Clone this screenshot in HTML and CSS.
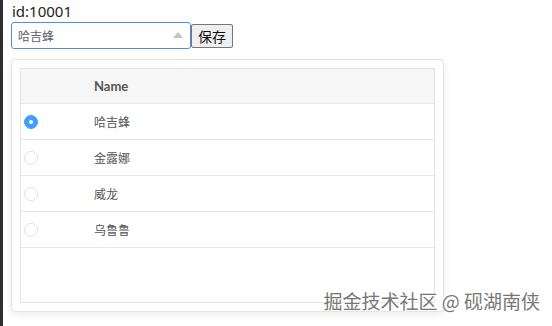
FILE: index.html
```html
<!DOCTYPE html>
<html lang="zh-CN">

<head>
    <meta charset="UTF-8">
    <meta name="viewport" content="width=device-width, initial-scale=1.0">
    <title>选择</title>
    <link rel="stylesheet" href="styles.css">
</head>

<body>
    <div class="page">
        <div class="id-line">id:10001</div>
        <div class="form-row">
            <div class="select">
                <span class="select-value">哈吉蜂</span>
                <span class="select-arrow"></span>
            </div>
            <button class="save-btn">保存</button>
        </div>

        <div class="panel">
            <div class="table">
                <div class="row head">
                    <div class="cell check"></div>
                    <div class="cell name">Name</div>
                </div>
                <div class="row">
                    <div class="cell check"><span class="radio on"></span></div>
                    <div class="cell name">哈吉蜂</div>
                </div>
                <div class="row">
                    <div class="cell check"><span class="radio"></span></div>
                    <div class="cell name">金露娜</div>
                </div>
                <div class="row">
                    <div class="cell check"><span class="radio"></span></div>
                    <div class="cell name">威龙</div>
                </div>
                <div class="row">
                    <div class="cell check"><span class="radio"></span></div>
                    <div class="cell name">乌鲁鲁</div>
                </div>
            </div>
        </div>
    </div>

    <div class="watermark">掘金技术社区 @ 砚湖南侠</div>
</body>

</html>
```

FILE: styles.css
```css
body {
    margin: 0;
    height: 326px;
    background: #fff;
    border-left: 3px solid #2e2e2e;
    font-family: "Noto Sans", "Noto Sans CJK SC", sans-serif;
    color: #222;
    overflow: hidden;
}

.page {
    padding: 0 0 0 8px;
}

.id-line {
    font-size: 15px;
    line-height: 22px;
    padding-left: 1px;
}

.form-row {
    display: flex;
    align-items: center;
}

.select {
    height: 25px;
    width: 165px;
    border: 1px solid #4a90e2;
    border-radius: 3px;
    display: flex;
    align-items: center;
    justify-content: space-between;
    padding: 0 7px 0 6px;
}

.select-value {
    font-family: "Noto Sans CJK SC", sans-serif;
    font-size: 12px;
    color: #606266;
}

.select-arrow {
    width: 0;
    height: 0;
    border-left: 5px solid transparent;
    border-right: 5px solid transparent;
    border-bottom: 6px solid #c0c4cc;
    margin-top: -2px;
}

.save-btn {
    height: 24px;
    padding: 0 6px;
    font-family: "Noto Sans CJK SC", sans-serif;
    font-size: 14px;
    background: #efefef;
    border: 1px solid #767676;
    border-radius: 2px;
    color: #111;
}

.panel {
    width: 415px;
    margin-top: 10px;
    padding: 8px;
    border: 1px solid #e4e4e4;
    border-radius: 4px;
    box-shadow: 0 2px 8px rgba(0, 0, 0, 0.08);
    background: #fff;
}

.table {
    height: 233px;
    border: 1px solid #e3e3e3;
}

.row {
    display: flex;
    align-items: center;
    height: 35px;
    border-bottom: 1px solid #e6e6e6;
    font-family: "Noto Sans CJK SC", sans-serif;
    font-size: 12px;
    color: #555;
}

.row.head {
    height: 34px;
    background: #f6f6f6;
    font-family: "Lato", "Noto Sans", sans-serif;
    font-weight: bold;
    font-size: 13px;
    color: #555;
}

.cell.check {
    width: 70px;
    padding-left: 3px;
    display: flex;
    align-items: center;
}

.radio {
    width: 12px;
    height: 12px;
    border: 1px solid #e0e0e0;
    border-radius: 50%;
    background: #fff;
    position: relative;
}

.radio.on {
    background: #409eff;
    border-color: #409eff;
}

.radio.on::after {
    content: "";
    position: absolute;
    width: 4px;
    height: 4px;
    border-radius: 50%;
    background: #fff;
    left: 4px;
    top: 4px;
}

.watermark {
    position: absolute;
    right: 12px;
    bottom: 13px;
    font-family: "Noto Sans CJK SC", sans-serif;
    font-size: 19px;
    line-height: 24px;
    color: #777;
    text-shadow: 1px 1px 0 #fff, -1px -1px 0 #fff;
}
```
